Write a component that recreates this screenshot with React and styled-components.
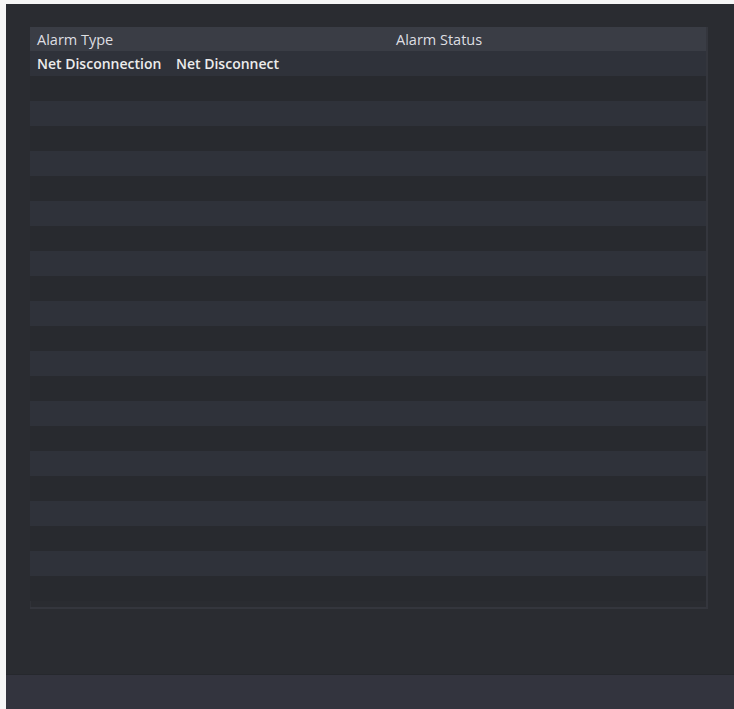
import React from 'react'
import styled, { createGlobalStyle } from 'styled-components'

const GlobalStyle = createGlobalStyle`
    html, body {
        margin: 0;
        padding: 0;
        background: #f4f4f4;
    }
    body {
        font-family: "Open Sans", "Noto Sans", sans-serif;
    }
`
const Frame = styled.div`
    width: 734px;
    height: 709px;
    padding: 4px 0 0 6px;
    box-sizing: border-box;
    background: #f6f6f6;
`
const Panel = styled.div`
    height: 100%;
    display: flex;
    flex-direction: column;
    background: #2a2c31;
`
const Body = styled.div`
    flex: 1;
    padding: 23px 26px 0 24px;
`
const Table = styled.div`
    height: 580px;
    display: flex;
    flex-direction: column;
    border-right: 2px solid #34363d;
    border-bottom: 2px solid #34363d;
    box-shadow: inset 1px 0 0 #303238;
`
const Header = styled.div`
    height: 24px;
    display: grid;
    grid-template-columns: 359px 1fr;
    align-items: center;
    background: #3a3d45;
    color: #dedfe2;
    font-size: 14.5px;
`
const Cell = styled.div`
    padding-left: 7px;
    white-space: nowrap;
`
const Row = styled.div`
    height: 25px;
    display: grid;
    grid-template-columns: 139px 1fr;
    align-items: center;
    background: ${p => (p.$odd ? '#2f323a' : '#282a2f')};
    color: #ececec;
    font-size: 14px;
    font-weight: 600;
`
const Bottom = styled.div`
    height: 34px;
    background: #33343e;
    border-top: 1px solid #26282d;
`

const rows = Array.from({ length: 22 }, (_, i) => i)

const App = () => {
  return (
    <>
      <GlobalStyle />
      <Frame>
        <Panel>
          <Body>
            <Table>
              <Header>
                <Cell>Alarm Type</Cell>
                <Cell>Alarm Status</Cell>
              </Header>
              {rows.map(i => (
                <Row key={i} $odd={i % 2 === 0}>
                  {i === 0 ? (
                    <>
                      <Cell>Net Disconnection</Cell>
                      <Cell>Net Disconnect</Cell>
                    </>
                  ) : null}
                </Row>
              ))}
            </Table>
          </Body>
          <Bottom />
        </Panel>
      </Frame>
    </>
  )
}

export default App
